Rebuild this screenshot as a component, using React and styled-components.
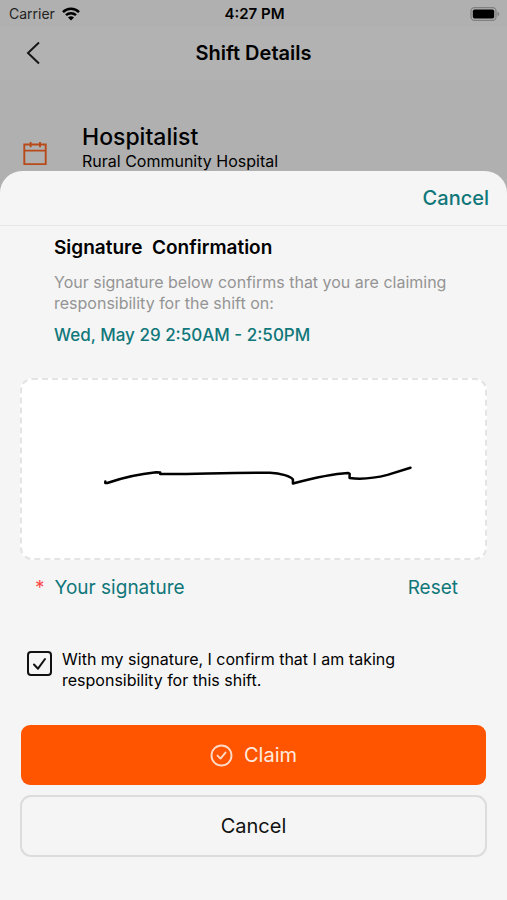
import React, { useState } from 'react';
import styled, { createGlobalStyle } from 'styled-components';

const GlobalStyle = createGlobalStyle`
  *, *::before, *::after {
    box-sizing: border-box;
  }

  body {
    margin: 0;
    background: #b0b0b0;
    font-family: Inter, 'Liberation Sans', sans-serif;
    color: #000;
  }

  button {
    padding: 0;
    border: none;
    background: none;
    font-family: inherit;
    cursor: pointer;
  }

  h1, h2, p {
    margin: 0;
  }

  svg {
    display: block;
  }
`;

const Screen = styled.div`
  display: flex;
  flex-direction: column;
  min-height: 100vh;
`;

const StatusBar = styled.div`
  display: grid;
  grid-template-columns: 1fr auto 1fr;
  align-items: center;
  height: 27px;
  padding: 0 7px 0 9px;
  font-size: 14px;
  line-height: 20px;
`;

const Carrier = styled.div`
  display: flex;
  align-items: center;
  gap: 7px;
  color: #222;
`;

const Clock = styled.time`
  font-size: 15px;
  font-weight: 600;
`;

const Battery = styled.div`
  justify-self: end;
`;

const NavBar = styled.header`
  display: grid;
  grid-template-columns: 1fr auto 1fr;
  align-items: center;
  height: 53px;
  padding: 0 24px 2px;
  background: #b2b2b2;
`;

const BackButton = styled.button`
  justify-self: start;
`;

const NavTitle = styled.h1`
  font-size: 20px;
  font-weight: 600;
  line-height: 24px;
`;

const ShiftRow = styled.section`
  display: flex;
  align-items: flex-end;
  gap: 34px;
  height: 91px;
  padding: 0 22px;
`;

const ShiftRole = styled.h2`
  font-size: 23px;
  font-weight: 500;
  line-height: 28px;
`;

const ShiftPlace = styled.p`
  font-size: 16px;
  line-height: 20px;
`;

const Sheet = styled.main`
  flex: 1;
  background: #f5f5f5;
  border-radius: 22px 22px 0 0;
`;

const SheetHeader = styled.div`
  display: flex;
  align-items: center;
  justify-content: flex-end;
  height: 55px;
  padding: 0 18px;
  border-bottom: 1px solid #e6e6e6;
`;

const TextButton = styled.button`
  color: #10777a;
  font-size: ${({ $large }) => ($large ? 20 : 19)}px;
  font-weight: ${({ $large }) => ($large ? 500 : 400)};
  line-height: 24px;
`;

const Intro = styled.section`
  padding: 10px 54px 0;
`;

const IntroTitle = styled.h2`
  font-size: 19px;
  font-weight: 600;
  line-height: 24px;
  white-space: pre;
`;

const IntroText = styled.p`
  margin-top: 12px;
  color: #949494;
  font-size: 16px;
  line-height: 21px;
`;

const ShiftTime = styled.p`
  margin-top: 9px;
  color: #10777a;
  font-size: 17px;
  font-weight: 500;
  line-height: 24px;
`;

const Form = styled.form`
  padding: 31px 20px 43px;
`;

const SignaturePad = styled.div`
  height: 182px;
  background: #fff;
  border: 2px dashed #e4e4e4;
  border-radius: 12px;

  svg {
    width: 100%;
    height: 100%;
  }
`;

const PadFooter = styled.div`
  display: flex;
  align-items: center;
  justify-content: space-between;
  padding: 16px 29px 0 15px;
`;

const PadLabel = styled.div`
  display: flex;
  gap: 10px;
  color: #10777a;
  font-size: 19px;
  line-height: 24px;
`;

const Required = styled.span`
  color: #fa4b4b;
`;

const Confirm = styled.label`
  display: flex;
  gap: 10px;
  margin-top: 49px;
  padding-left: 7px;
  font-size: 16px;
  line-height: 21px;
  cursor: pointer;
`;

const CheckBox = styled.span`
  display: grid;
  flex: none;
  width: 25px;
  height: 25px;
  margin-top: 2px;

  > * {
    grid-area: 1 / 1;
  }

  input {
    appearance: none;
    width: 25px;
    height: 25px;
    margin: 0;
    border: 2px solid #111;
    border-radius: 4px;
  }

  svg {
    pointer-events: none;
    visibility: hidden;
  }

  input:checked + svg {
    visibility: visible;
  }
`;

const Actions = styled.div`
  display: flex;
  flex-direction: column;
  gap: 10px;
  margin-top: 34px;
`;

const ActionButton = styled.button`
  display: flex;
  align-items: center;
  justify-content: center;
  gap: 11px;
  height: ${({ $primary }) => ($primary ? 60 : 62)}px;
  margin: 0 ${({ $primary }) => ($primary ? 1 : 0)}px;
  border: ${({ $primary }) => ($primary ? 'none' : '2px solid #dcdcde')};
  border-radius: ${({ $primary }) => ($primary ? 9 : 11)}px;
  background: ${({ $primary }) => ($primary ? '#ff5500' : '#f5f5f5')};
  color: ${({ $primary }) => ($primary ? '#ffeadf' : '#111')};
  font-size: 20px;
  line-height: 24px;
`;

const WifiIcon = () => (
  <svg width="18" height="14" viewBox="0 0 18 14" fill="none" stroke="#000" strokeWidth="2.5">
    <path d="M1 5.1a11.4 11.4 0 0 1 16 0" />
    <path d="M4 8.2a7.2 7.2 0 0 1 10 0" />
    <path d="M9 13.6 6 10.6a4.3 4.3 0 0 1 6 0z" fill="#000" stroke="none" />
  </svg>
);

const BatteryIcon = () => (
  <svg width="30" height="14" viewBox="0 0 30 14" fill="none">
    <rect x="1" y="0.7" width="25" height="12.6" rx="3.5" stroke="#808080" strokeWidth="1.3" />
    <rect x="2.8" y="2.5" width="21.4" height="9" rx="1.8" fill="#000" />
    <path d="M27.5 4.8c2.4.9 2.4 3.5 0 4.4z" fill="#808080" />
  </svg>
);

const BackIcon = () => (
  <svg width="18" height="24" viewBox="0 0 18 24" fill="none" stroke="#161616" strokeWidth="2">
    <path d="M15 1.5 4 12l11 10.5" />
  </svg>
);

const CalendarIcon = () => (
  <svg width="26" height="30" viewBox="0 0 26 30" fill="none" stroke="#b84a19" strokeWidth="1.9">
    <path d="M2.3 3.5h21.4v19.6H2.3zM2.3 9.6h21.4M8.6 1v5.2M18 1v5.2" />
  </svg>
);

const CircleCheckIcon = () => (
  <svg width="23" height="23" viewBox="0 0 23 23" fill="none" stroke="#ffd9c5" strokeWidth="1.9">
    <circle cx="11.5" cy="11.5" r="10" />
    <path d="m7.5 11.6 3 3 5-6" strokeLinecap="round" strokeLinejoin="round" />
  </svg>
);

const App = () => {
  const [signed, setSigned] = useState(true);
  const [confirmed, setConfirmed] = useState(true);

  return (
    <>
      <GlobalStyle />
      <Screen>
        <StatusBar>
          <Carrier>
            Carrier
            <WifiIcon />
          </Carrier>
          <Clock>4:27 PM</Clock>
          <Battery>
            <BatteryIcon />
          </Battery>
        </StatusBar>

        <NavBar>
          <BackButton type="button" aria-label="Back">
            <BackIcon />
          </BackButton>
          <NavTitle>Shift Details</NavTitle>
        </NavBar>

        <ShiftRow>
          <CalendarIcon />
          <div>
            <ShiftRole>Hospitalist</ShiftRole>
            <ShiftPlace>Rural Community Hospital</ShiftPlace>
          </div>
        </ShiftRow>

        <Sheet>
          <SheetHeader>
            <TextButton type="button" $large>Cancel</TextButton>
          </SheetHeader>

          <Intro>
            <IntroTitle>Signature  Confirmation</IntroTitle>
            <IntroText>
              Your signature below confirms that you are claiming responsibility for the shift on:
            </IntroText>
            <ShiftTime>Wed, May 29 2:50AM - 2:50PM</ShiftTime>
          </Intro>

          <Form onSubmit={(e) => e.preventDefault()}>
            <SignaturePad role="img" aria-label="Your signature">
              {signed && (
                <svg viewBox="0 0 464 178" fill="none" stroke="#000" strokeWidth="2.5" strokeLinecap="round" strokeLinejoin="round">
                  <path d="M83.5 101.5v1.5h2c14-5 31-9 49-10.8l4 .3v1.5c26 .8 69-1.8 110-1.2 11 .4 21 3.7 23 6.7v4c17-4.5 36-9.5 55-10.5l1.8.6v4.5c11 1.3 24 .4 38-3.2l23-7.2" />
                </svg>
              )}
            </SignaturePad>
            <PadFooter>
              <PadLabel>
                <Required>*</Required>
                Your signature
              </PadLabel>
              <TextButton type="button" onClick={() => setSigned(false)}>Reset</TextButton>
            </PadFooter>

            <Confirm>
              <CheckBox>
                <input
                  type="checkbox"
                  checked={confirmed}
                  onChange={(e) => setConfirmed(e.target.checked)}
                />
                <svg width="25" height="25" viewBox="0 0 25 25" fill="none" stroke="#111" strokeWidth="2">
                  <path d="m7 13.5 4 4.2L18 8" strokeLinecap="round" strokeLinejoin="round" />
                </svg>
              </CheckBox>
              <span>
                With my signature, I confirm that I am taking
                <br />
                responsibility for this shift.
              </span>
            </Confirm>

            <Actions>
              <ActionButton type="submit" $primary>
                <CircleCheckIcon />
                Claim
              </ActionButton>
              <ActionButton type="button">Cancel</ActionButton>
            </Actions>
          </Form>
        </Sheet>
      </Screen>
    </>
  );
};

export default App;
